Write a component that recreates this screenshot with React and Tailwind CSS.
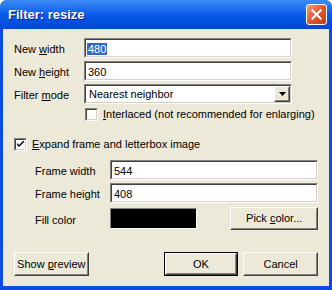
import React from "react";

const font = { fontFamily: '"Liberation Sans", Arial, sans-serif' };

const Label = ({ children }) => <span className="text-[11px] text-black leading-none">{children}</span>;

const Sunken = ({ children, className = "", inner = "bg-white" }) => (
	<div className={`border border-t-[#808080] border-l-[#808080] border-b-white border-r-white ${className}`}>
		<div className={`w-full h-full flex items-center border border-t-[#404040] border-l-[#404040] border-b-[#d4d0c8] border-r-[#d4d0c8] ${inner}`}>
			{children}
		</div>
	</div>
);

const Field = ({ value, selected, className = "" }) => (
	<Sunken className={`h-[20px] ${className}`}>
		<div className="pl-[1px]">
			{selected ? (
				<span className="bg-[#316ac5] text-white text-[11px] leading-[14px] px-[1px]">{value}</span>
			) : (
				<span className="text-[11px] leading-[14px] text-black px-[1px]">{value}</span>
			)}
		</div>
	</Sunken>
);

const Button = ({ children, isDefault, className = "" }) => (
	<div
		className={`flex items-center justify-center bg-[#ece9d8] text-[11px] text-black ${
			isDefault ? "border border-black" : ""
		} ${className}`}
	>
		<div className="w-full h-full flex items-center justify-center border border-t-white border-l-white border-b-[#404040] border-r-[#404040]">
			<div className="w-full h-full flex items-center justify-center border border-t-[#ece9d8] border-l-[#ece9d8] border-b-[#808080] border-r-[#808080]">
				<span className="leading-none">{children}</span>
			</div>
		</div>
	</div>
);

const Check = ({ checked }) => (
	<div className="w-[13px] h-[13px] shrink-0 bg-white border border-t-[#808080] border-l-[#808080] border-b-white border-r-white">
		<div className="w-full h-full border border-t-[#404040] border-l-[#404040] border-b-[#d4d0c8] border-r-[#d4d0c8] flex items-center justify-center">
			{checked && (
				<svg width="7" height="7" viewBox="0 0 7 7">
					<path d="M0 2 L0 4 L2 6 L7 1 L7 -1 L2 4 Z" fill="#000" />
				</svg>
			)}
		</div>
	</div>
);

export default function App() {
	return (
		<div className="w-[332px] h-[290px] flex flex-col bg-[#0a4be0] rounded-t-[7px] overflow-hidden" style={font}>
			<div className="h-[29px] shrink-0 flex items-center justify-between pl-[8px] pr-[5px] bg-gradient-to-b from-[#3d8cf6] via-[#0a5ae8] to-[#0446d6]">
				<span className="text-white font-bold text-[13px] leading-none [text-shadow:1px_1px_0_#0a1e8a]">Filter: resize</span>
				<div className="w-[21px] h-[21px] rounded-[3px] border border-white bg-gradient-to-br from-[#f09a78] via-[#e0552d] to-[#c23a12] flex items-center justify-center">
					<svg width="11" height="11" viewBox="0 0 11 11">
						<path d="M1.5 1.5 L9.5 9.5 M9.5 1.5 L1.5 9.5" stroke="#fff" strokeWidth="2.2" strokeLinecap="square" />
					</svg>
				</div>
			</div>
			<div className="flex-1 mx-[3px] mb-[4px] bg-[#ece9d8] flex flex-col pl-[11px] pr-[11px]">
				<div className="flex items-center mt-[9px] h-[20px]">
					<div className="w-[70px]"><Label>New <u>w</u>idth</Label></div>
					<Field value="480" selected className="w-[208px]" />
				</div>
				<div className="flex items-center mt-[3px] h-[20px]">
					<div className="w-[70px]"><Label>New <u>h</u>eight</Label></div>
					<Field value="360" className="w-[208px]" />
				</div>
				<div className="flex items-center mt-[3px] h-[20px]">
					<div className="w-[70px]"><Label>Filter <u>m</u>ode</Label></div>
					<Sunken className="w-[208px] h-[20px]">
						<span className="flex-1 text-[11px] pl-[3px] leading-none">Nearest neighbor</span>
						<Button className="w-[16px] h-[16px]">
							<svg width="7" height="4" viewBox="0 0 7 4">
								<path d="M0 0 H7 L3.5 4 Z" fill="#000" />
							</svg>
						</Button>
					</Sunken>
				</div>
				<div className="flex items-center mt-[4px] ml-[71px] h-[13px] gap-[5px]">
					<Check />
					<Label><u>I</u>nterlaced (not recommended for enlarging)</Label>
				</div>
				<div className="flex items-center mt-[17px] h-[13px] gap-[5px]">
					<Check checked />
					<Label><u>E</u>xpand frame and letterbox image</Label>
				</div>
				<div className="flex items-center mt-[9px] h-[20px] pl-[21px]">
					<div className="w-[75px]"><Label>Frame width</Label></div>
					<Field value="544" className="w-[208px]" />
				</div>
				<div className="flex items-center mt-[3px] h-[20px] pl-[21px]">
					<div className="w-[75px]"><Label>Frame height</Label></div>
					<Field value="408" className="w-[208px]" />
				</div>
				<div className="flex items-center mt-[4px] h-[23px] pl-[21px]">
					<div className="w-[75px]"><Label>Fill color</Label></div>
					<div className="w-[88px] h-[21px] bg-black border border-t-[#808080] border-l-[#808080] border-b-white border-r-white" />
					<Button className="ml-[33px] w-[88px] h-[23px]">Pick <u>c</u>olor...</Button>
				</div>
				<div className="flex items-center mt-[22px] h-[24px]">
					<Button className="w-[75px] h-[24px]">Show <u>p</u>review</Button>
					<Button isDefault className="ml-[75px] w-[75px] h-[24px]">OK</Button>
					<Button className="ml-[5px] w-[75px] h-[24px]">Cancel</Button>
				</div>
			</div>
		</div>
	);
}
